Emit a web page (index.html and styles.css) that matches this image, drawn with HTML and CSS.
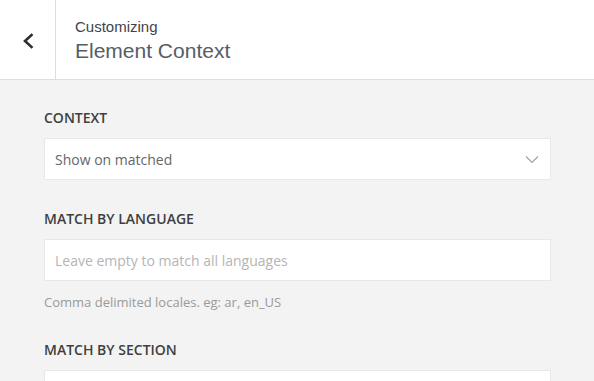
FILE: index.html
```html
<!DOCTYPE html>
<html>
<head>
<meta charset="utf-8">
<link rel="stylesheet" href="styles.css">
</head>
<body>
<div class="header">
  <div class="back">
    <svg width="14" height="16" viewBox="0 0 14 16"><path d="M10.5 2 L4 8 L10.5 14" fill="none" stroke="#2b2f33" stroke-width="2.6" stroke-linecap="square"/></svg>
  </div>
  <div class="title">
    <div class="action">Customizing</div>
    <div class="panel-title">Element Context</div>
  </div>
</div>
<div class="content">
  <div class="field">
    <div class="label">CONTEXT</div>
    <div class="control select">
      <span class="value">Show on matched</span>
      <svg class="chev" width="14" height="9" viewBox="0 0 14 9"><path d="M1 1.5 L7 7.5 L13 1.5" fill="none" stroke="#a0a0a0" stroke-width="1.1"/></svg>
    </div>
  </div>
  <div class="field">
    <div class="label">MATCH BY LANGUAGE</div>
    <div class="control"><span class="placeholder">Leave empty to match all languages</span></div>
    <div class="desc">Comma delimited locales. eg: ar, en_US</div>
  </div>
  <div class="field">
    <div class="label">MATCH BY SECTION</div>
    <div class="control"></div>
  </div>
</div>
</body>
</html>
```
FILE: styles.css
```css
html, body {
  margin: 0;
  padding: 0;
}
body {
  background: #f3f3f3;
  width: 594px;
  height: 381px;
  overflow: hidden;
}
.header {
  display: flex;
  height: 79px;
  background: #fff;
  border-bottom: 1px solid #dedede;
}
.back {
  width: 56px;
  border-right: 1px solid #dedede;
  display: flex;
  align-items: center;
  justify-content: center;
  padding-top: 3px;
  box-sizing: border-box;
}
.title {
  padding: 18px 0 0 19px;
  font-family: "Liberation Sans", Arial, sans-serif;
  color: #555d66;
}
.action {
  font-size: 15px;
  line-height: 17px;
  font-weight: normal;
  color: #3f444a;
}
.panel-title {
  margin-top: 3px;
  font-size: 21px;
  line-height: 26px;
  font-weight: 300;
  color: #555d66;
}
.content {
  padding: 28px 43px 0 44px;
  font-family: "Open Sans", sans-serif;
}
.field {
  margin-bottom: 29px;
}
.label {
  font-size: 14px;
  line-height: 20px;
  font-weight: 600;
  color: #3f3f3f;
  margin-bottom: 10px;
}
.control {
  height: 42px;
  box-sizing: border-box;
  background: #fff;
  border: 1px solid #e8e8e8;
  display: flex;
  align-items: center;
  padding: 0 11px 0 10px;
  font-size: 14px;
}
.select {
  justify-content: space-between;
}
.value {
  color: #666;
}
.placeholder {
  color: #b5b5b5;
}
.chev {
  display: block;
}
.desc {
  margin-top: 12px;
  font-size: 13px;
  line-height: 18px;
  color: #9a9a9a;
}
```
